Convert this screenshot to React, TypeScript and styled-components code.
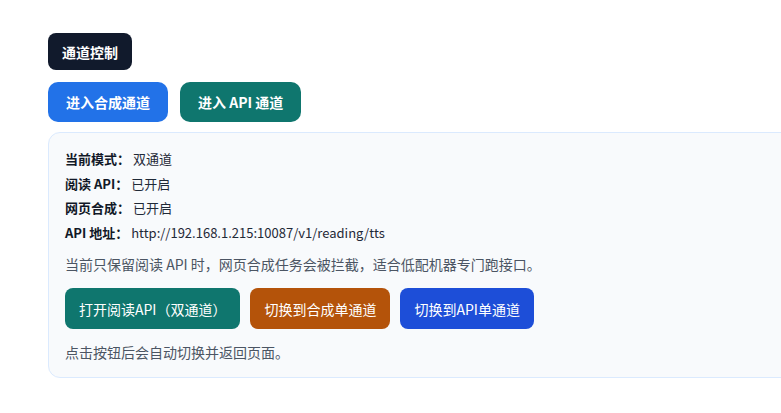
import styled, { createGlobalStyle } from 'styled-components'

const GlobalStyle = createGlobalStyle`
  html, body {
    margin: 0;
    padding: 0;
    background: #ffffff;
    overflow: hidden;
  }
  body {
    font-family: "Noto Sans CJK SC", "Noto Sans", sans-serif;
    color: #1f2937;
  }
`

type Tone = 'blue' | 'teal' | 'orange' | 'indigo'

const toneColors: Record<Tone, string> = {
  blue: '#2272e8',
  teal: '#0f766e',
  orange: '#b4530a',
  indigo: '#1d4ed8'
}

const statusRows = [
  { label: '当前模式：', value: '双通道' },
  { label: '阅读 API：', value: '已开启' },
  { label: '网页合成：', value: '已开启' },
  { label: 'API 地址：', value: 'http://192.168.1.215:10087/v1/reading/tts' }
]

export default function App() {
  return (
    <Page>
      <GlobalStyle />
      <Header>通道控制</Header>
      <EntryRow>
        <EntryButton tone="blue">进入合成通道</EntryButton>
        <EntryButton tone="teal">进入 API 通道</EntryButton>
      </EntryRow>
      <Panel>
        <StatusList>
          {statusRows.map(row => (
            <StatusLine key={row.label}>
              <strong>{row.label}</strong> {row.value}
            </StatusLine>
          ))}
        </StatusList>
        <Note>当前只保留阅读 API 时，网页合成任务会被拦截，适合低配机器专门跑接口。</Note>
        <ActionRow>
          <ActionButton tone="teal">打开阅读API（双通道）</ActionButton>
          <ActionButton tone="orange">切换到合成单通道</ActionButton>
          <ActionButton tone="indigo">切换到API单通道</ActionButton>
        </ActionRow>
        <Footnote>点击按钮后会自动切换并返回页面。</Footnote>
      </Panel>
    </Page>
  )
}

const Page = styled.div`
  display: flex;
  flex-direction: column;
  align-items: flex-start;
  padding: 33px 0 0 48px;
`

const Header = styled.div`
  height: 37px;
  padding: 0 14px;
  display: flex;
  align-items: center;
  background: #111a2c;
  color: #ffffff;
  font-size: 14px;
  font-weight: 700;
  border-radius: 8px;
`

const EntryRow = styled.div`
  display: flex;
  gap: 12px;
  margin-top: 12px;
`

const EntryButton = styled.button<{ tone: Tone }>`
  height: 40px;
  padding: 0 18px;
  border: none;
  border-radius: 10px;
  background: ${p => toneColors[p.tone]};
  color: #ffffff;
  font-family: inherit;
  font-size: 14px;
  font-weight: 700;
`

const Panel = styled.div`
  width: 760px;
  margin-top: 10px;
  padding: 14px 16px 14px;
  box-sizing: border-box;
  background: #f8fafc;
  border: 1px solid #dbeafe;
  border-radius: 12px;
`

const StatusList = styled.div`
  display: flex;
  flex-direction: column;
`

const StatusLine = styled.div`
  font-size: 13px;
  line-height: 24.5px;
  color: #1f2937;

  strong {
    font-weight: 700;
    color: #111827;
  }
`

const Note = styled.p`
  margin: 8px 0 0;
  font-size: 14px;
  line-height: 22px;
  color: #4b5563;
`

const ActionRow = styled.div`
  display: flex;
  gap: 10px;
  margin-top: 13px;
`

const ActionButton = styled.button<{ tone: Tone }>`
  height: 41px;
  padding: 0 14px;
  border: none;
  border-radius: 8px;
  background: ${p => toneColors[p.tone]};
  color: #ffffff;
  font-family: inherit;
  font-size: 14px;
  font-weight: 400;
`

const Footnote = styled.p`
  margin: 12px 0 0;
  font-size: 14px;
  line-height: 22px;
  color: #4b5563;
`
